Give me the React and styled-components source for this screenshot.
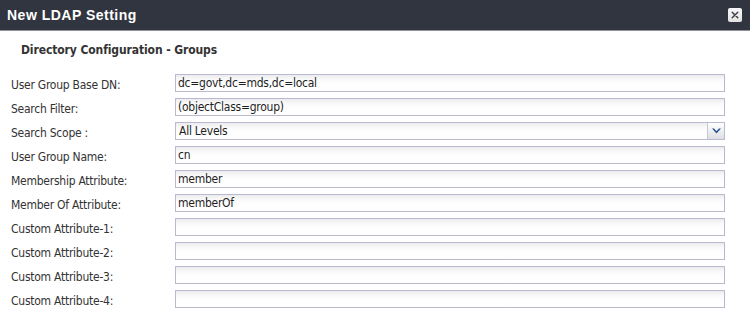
import React from "react";
import styled, { createGlobalStyle } from "styled-components";

const Global = createGlobalStyle`
  html, body { margin: 0; padding: 0; background: #fff; }
  body { font-family: "DejaVu Sans Condensed", "DejaVu Sans", Verdana, sans-serif; }
`;

const Dialog = styled.div`
  width: 750px;
  height: 328px;
  background: #fff;
  overflow: hidden;
`;

const TitleBar = styled.div`
  height: 30px;
  background: #31353f;
  border-bottom: 1px solid #8e919a;
  display: flex;
  align-items: center;
  justify-content: space-between;
  padding: 0 8px 0 7px;
`;

const Title = styled.h1`
  margin: 0;
  font-family: "Liberation Sans", Arial, sans-serif;
  font-weight: bold;
  font-size: 14px;
  letter-spacing: 0.5px;
  line-height: 30px;
  color: #fff;
`;

const CloseButton = styled.button`
  width: 14px;
  height: 14px;
  padding: 0;
  margin-top: -1px;
  border: none;
  border-radius: 2px;
  background: linear-gradient(#f7f7f7, #e2e2e2);
  display: flex;
  align-items: center;
  justify-content: center;
`;

const SectionTitle = styled.h2`
  margin: 0;
  padding: 13px 0 0 21px;
  font-size: 12px;
  line-height: 13px;
  font-weight: bold;
  letter-spacing: -0.1px;
  color: #333;
`;

const Form = styled.div`
  display: grid;
  grid-template-columns: 164px 550px;
  row-gap: 6px;
  padding: 17px 0 0 11px;
`;

const Label = styled.label`
  font-size: 12px;
  line-height: 18px;
  padding-top: 2px;
  height: 18px;
  box-sizing: border-box;
  color: #333;
  letter-spacing: -0.25px;
  white-space: nowrap;
`;

const Field = styled.div`
  height: 18px;
  box-sizing: border-box;
  border: 1px solid #b8bbcf;
  background: linear-gradient(#ebebeb 0px, #f6f6f6 3px, #fdfdfd 7px, #fff 100%);
  display: flex;
  align-items: center;
`;

const Input = styled.input`
  flex: 1;
  min-width: 0;
  height: 16px;
  border: none;
  outline: none;
  background: transparent;
  padding: 0 2px;
  margin: 0;
  font-family: "DejaVu Sans Condensed", "DejaVu Sans", Verdana, sans-serif;
  font-size: 12px;
  line-height: 16px;
  letter-spacing: -0.25px;
  color: #1e1e1e;
`;

const SelectText = styled.div`
  flex: 1;
  padding: 0 3px;
  font-size: 12px;
  line-height: 16px;
  letter-spacing: -0.25px;
  color: #1e1e1e;
`;

const DropButton = styled.div`
  width: 16px;
  height: 16px;
  border-left: 1px solid #c4c7d6;
  background: linear-gradient(#ffffff, #dedfe4);
  display: flex;
  align-items: center;
  justify-content: center;
`;

const rows = [
  { label: "User Group Base DN:", value: "dc=govt,dc=mds,dc=local" },
  { label: "Search Filter:", value: "(objectClass=group)" },
  { label: "Search Scope :", value: "All Levels", select: true },
  { label: "User Group Name:", value: "cn" },
  { label: "Membership Attribute:", value: "member" },
  { label: "Member Of Attribute:", value: "memberOf" },
  { label: "Custom Attribute-1:", value: "" },
  { label: "Custom Attribute-2:", value: "" },
  { label: "Custom Attribute-3:", value: "" },
  { label: "Custom Attribute-4:", value: "" },
];

export default function App() {
  return (
    <>
      <Global />
      <Dialog>
        <TitleBar>
          <Title>New LDAP Setting</Title>
          <CloseButton aria-label="Close">
            <svg width="10" height="10" viewBox="0 0 10 10">
              <path d="M2.2 2.2 L7.8 7.8 M7.8 2.2 L2.2 7.8" stroke="#3a3d45" strokeWidth="1.4" strokeLinecap="round" />
            </svg>
          </CloseButton>
        </TitleBar>
        <SectionTitle>Directory Configuration - Groups</SectionTitle>
        <Form>
          {rows.map((r) => (
            <React.Fragment key={r.label}>
              <Label>{r.label}</Label>
              <Field>
                {r.select ? (
                  <>
                    <SelectText>{r.value}</SelectText>
                    <DropButton>
                      <svg width="9" height="6" viewBox="0 0 9 6">
                        <path d="M0 0.5 L4.5 5.5 L9 0.5 L7 0.5 L4.5 3.2 L2 0.5 Z" fill="#24508f" />
                      </svg>
                    </DropButton>
                  </>
                ) : (
                  <Input defaultValue={r.value} />
                )}
              </Field>
            </React.Fragment>
          ))}
        </Form>
      </Dialog>
    </>
  );
}
